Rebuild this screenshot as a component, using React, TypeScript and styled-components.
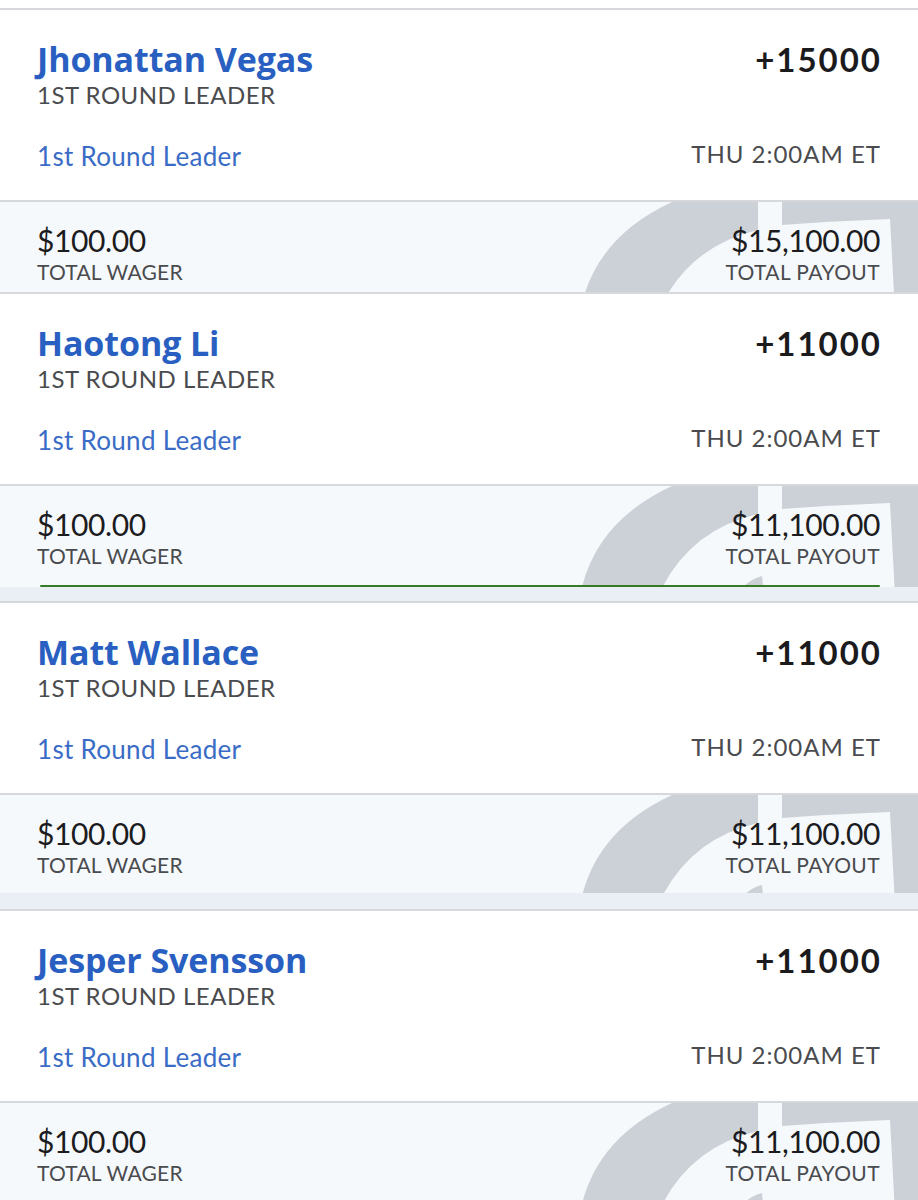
import React from "react";
import styled, { createGlobalStyle } from "styled-components";

const GlobalStyle = createGlobalStyle`
  body {
    margin: 0;
    background: #ffffff;
    font-family: "Lato", "Noto Sans", sans-serif;
  }
`;

const bets = [
  { name: "Jhonattan Vegas", odds: "+15000", payout: "$15,100.00", footer: 90, strip: 0, live: false },
  { name: "Haotong Li", odds: "+11000", payout: "$11,100.00", footer: 101, strip: 14, live: true },
  { name: "Matt Wallace", odds: "+11000", payout: "$11,100.00", footer: 98, strip: 16, live: false },
  { name: "Jesper Svensson", odds: "+11000", payout: "$11,100.00", footer: 100, strip: 0, live: false },
];

function App() {
  return (
    <>
      <GlobalStyle />
      <Page>
        {bets.map((bet, index) => (
          <BetCard key={index} bet={bet} />
        ))}
      </Page>
    </>
  );
}

const Watermark = () => (
  <MarkSvg width="918" height="110" viewBox="0 0 918 110">
    <path d="M580,110 Q594,36 672,0 L758,0 L758,28 Q688,44 658,110 Z" fill="#ccd1d8" />
    <path d="M782,0 L918,0 L918,110 L895,110 L890,17 Q836,19 782,23 Z" fill="#ccd1d8" />
    <path d="M736,110 Q746,94 762,90 L764,110 Z" fill="#ccd1d8" />
  </MarkSvg>
);

const BetCard = ({ bet }) => (
  <Card>
    <Header>
      <TopRow>
        <Selection>{bet.name}</Selection>
        <Odds>{bet.odds}</Odds>
      </TopRow>
      <Market>1ST ROUND LEADER</Market>
      <BottomRow>
        <MarketLink>1st Round Leader</MarketLink>
        <Time>THU 2:00AM ET</Time>
      </BottomRow>
    </Header>
    <Footer $height={bet.footer}>
      <Watermark />
      <Amounts>
        <Amount>
          <Money>$100.00</Money>
          <Label>TOTAL WAGER</Label>
        </Amount>
        <Amount $right>
          <Money>{bet.payout}</Money>
          <Label $right>TOTAL PAYOUT</Label>
        </Amount>
      </Amounts>
      {bet.live && <Progress />}
    </Footer>
    {bet.strip > 0 && <Strip $height={bet.strip} />}
  </Card>
);

const Page = styled.div`
  padding-top: 8px;
  width: 918px;
  overflow: hidden;
`;

const Card = styled.div`
  border-top: 2px solid #d6d8dc;
  background: #ffffff;
`;

const Header = styled.div`
  height: 190px;
  box-sizing: border-box;
  padding: 29px 38px 0 37px;
`;

const TopRow = styled.div`
  display: flex;
  justify-content: space-between;
  align-items: flex-start;
`;

const Selection = styled.div`
  font-family: "Open Sans", "Lato", sans-serif;
  font-size: 34px;
  line-height: 40px;
  font-weight: 700;
  letter-spacing: -0.1px;
  color: #2a5fc2;
`;

const Odds = styled.div`
  font-size: 33px;
  line-height: 40px;
  font-weight: 700;
  letter-spacing: 2px;
  margin-right: -2px;
  color: #1b1b1d;
`;

const Market = styled.div`
  margin-top: 2px;
  font-size: 24px;
  line-height: 28px;
  letter-spacing: 0.5px;
  color: #4a4b4e;
`;

const BottomRow = styled.div`
  margin-top: 31px;
  display: flex;
  justify-content: space-between;
  align-items: flex-start;
`;

const MarketLink = styled.div`
  font-size: 26px;
  line-height: 32px;
  letter-spacing: 0.3px;
  color: #3a6cc6;
`;

const Time = styled.div`
  font-size: 24px;
  line-height: 28px;
  letter-spacing: 1px;
  margin-right: -1px;
  color: #4a4b4e;
`;

const Footer = styled.div`
  position: relative;
  height: ${(p) => p.$height}px;
  border-top: 2px solid #d6d8dc;
  background: #f6f9fc;
  overflow: hidden;
`;

const MarkSvg = styled.svg`
  position: absolute;
  top: 0;
  left: 0;
  display: block;
`;

const Amounts = styled.div`
  position: relative;
  display: flex;
  justify-content: space-between;
  padding: 20px 38px 0 37px;
`;

const Amount = styled.div`
  display: flex;
  flex-direction: column;
  align-items: ${(p) => (p.$right ? "flex-end" : "flex-start")};
`;

const Money = styled.div`
  font-size: 30px;
  line-height: 36px;
  letter-spacing: -0.4px;
  color: #1c1c1e;
`;

const Label = styled.div`
  margin-top: 2px;
  font-size: 21px;
  line-height: 24px;
  letter-spacing: ${(p) => (p.$right ? "0.4px" : "0.2px")};
  color: #4a4b4e;
`;

const Progress = styled.div`
  position: absolute;
  left: 40px;
  right: 38px;
  bottom: 0;
  height: 2px;
  border-radius: 2px;
  background: #367a26;
`;

const Strip = styled.div`
  height: ${(p) => p.$height}px;
  background: #eaeef5;
`;

export default App;
